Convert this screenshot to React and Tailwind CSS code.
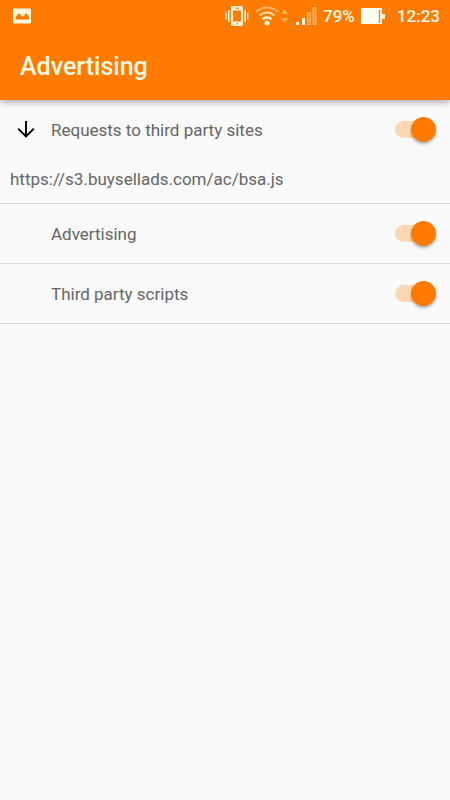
import React, { useState } from 'react'

const INITIAL_RULES = [
  {
    id: 'requests',
    label: 'Requests to third party sites',
    urls: ['https://s3.buysellads.com/ac/bsa.js'],
    enabled: true,
  },
  { id: 'advertising', label: 'Advertising', urls: [], enabled: true },
  { id: 'scripts', label: 'Third party scripts', urls: [], enabled: true },
]

function PictureIcon() {
  return (
    <svg width="20" height="16" viewBox="0 0 20 16" aria-hidden="true">
      <rect x="1" y="0.5" width="18" height="15" rx="1" fill="#fff8e0" />
      <path d="M3.5 11.5V9l3-3.5h1L10 8.5h1.5l2.2-3h1.3L17 9v2.5z" fill="#ff7b00" />
    </svg>
  )
}

function VibrateIcon() {
  return (
    <svg width="24" height="22" viewBox="0 0 24 22" fill="none" aria-hidden="true">
      <rect x="6" y="1" width="12" height="20" rx="1.5" fill="#fff3d6" />
      <path d="M8 5.5h8v11H8z" fill="#ff7b00" />
      <path d="M10 3.2h4M11 18.8h2" stroke="#ff7b00" strokeWidth="1" />
      <path d="M3.8 5v12M20.2 5v12" stroke="#fff3d6" strokeWidth="1.6" />
      <path d="M1.2 7.5v7M22.8 7.5v7" stroke="#ffe3b8" strokeWidth="1.5" />
    </svg>
  )
}

function WifiIcon() {
  return (
    <svg width="34" height="22" viewBox="0 0 34 22" fill="none" aria-hidden="true">
      <path d="M1.3 7a15 15 0 0 1 21.4 0" stroke="#ffb568" strokeWidth="2.2" />
      <path d="M4.6 10.6a10.4 10.4 0 0 1 14.8 0" stroke="#ffd9a5" strokeWidth="2.2" />
      <path d="M7.6 14.3a6.2 6.2 0 0 1 8.8 0" stroke="#fff8e6" strokeWidth="2.4" />
      <circle cx="12" cy="18" r="2.5" fill="#fff8e6" />
      <path d="M26 9l3.5-4.5L33 9zM26 13l3.5 4.5L33 13z" fill="#ffb25c" />
    </svg>
  )
}

function SignalIcon() {
  return (
    <svg width="22" height="20" viewBox="0 0 22 20" aria-hidden="true">
      <path d="M1 16h3v3H1zM7 12h3v7H7z" fill="#fff8e6" />
      <path d="M12.5 6.5h3v12h-3zM18 1.5h3v17h-3z" fill="#ff9836" stroke="#ffb568" strokeWidth="1" />
    </svg>
  )
}

function BatteryIcon() {
  return (
    <svg width="24" height="18" viewBox="0 0 24 18" aria-hidden="true">
      <path d="M0 1h21v16H0z" fill="#fffdf4" />
      <path d="M18.5 3v13" stroke="#d98a3c" strokeWidth="1.4" />
      <path d="M21 7h3v5h-3z" fill="#fff3d6" />
    </svg>
  )
}

function ArrowDownIcon() {
  return (
    <svg width="18" height="18" viewBox="0 0 18 18" fill="none" aria-hidden="true">
      <path d="M9 0v15M1.2 7.6 9 15.4l7.8-7.8" stroke="#000" strokeWidth="2" />
    </svg>
  )
}

function StatusBar() {
  return (
    <div className="flex h-8 items-center justify-between pl-3 pr-[10px] text-[#fff8e6]">
      <PictureIcon />
      <div className="flex items-center text-[17px] leading-6 font-medium">
        <VibrateIcon />
        <span className="ml-[6px]">
          <WifiIcon />
        </span>
        <span className="ml-[6px]">
          <SignalIcon />
        </span>
        <span className="ml-[6px]">79%</span>
        <span className="ml-[6px]">
          <BatteryIcon />
        </span>
        <span className="ml-3">12:23</span>
      </div>
    </div>
  )
}

function Switch({ id, checked, onChange }) {
  return (
    <input
      id={id}
      type="checkbox"
      role="switch"
      checked={checked}
      onChange={onChange}
      className="grid h-[25px] w-[41px] shrink-0 cursor-pointer appearance-none items-center before:col-start-1 before:row-start-1 before:h-[17px] before:w-[36px] before:rounded-full before:bg-gray-300 before:content-[''] after:col-start-1 after:row-start-1 after:size-[25px] after:rounded-full after:bg-gray-50 after:shadow-[0_2px_3px_rgba(0,0,0,0.3)] after:content-[''] checked:before:bg-[#fbd7b3] checked:after:justify-self-end checked:after:bg-[#ff7b00]"
    />
  )
}

export default function App() {
  const [rules, setRules] = useState(INITIAL_RULES)

  function toggleRule(id) {
    setRules(rules.map((r) => (r.id === id ? { ...r, enabled: !r.enabled } : r)))
  }

  return (
    <div className="min-h-screen bg-[#fafafa] font-[Roboto,sans-serif] text-[#666]">
      <header className="bg-[#ff7b00] shadow-[0_2px_7px_rgba(0,0,0,0.35)]">
        <StatusBar />
        <h1 className="px-5 pb-4 pt-[18px] text-[25px] leading-[34px] font-medium text-[#fff8e6]">
          Advertising
        </h1>
      </header>

      <ul>
        {rules.map((rule) => (
          <li key={rule.id} className="border-b border-[#d9d9d9]">
            <div className="flex h-[59px] items-center pr-[14px]">
              <span className="flex w-[51px] justify-center">
                {rule.urls.length > 0 && <ArrowDownIcon />}
              </span>
              <label htmlFor={rule.id} className="flex-1 text-[17px] leading-7">
                {rule.label}
              </label>
              <Switch
                id={rule.id}
                checked={rule.enabled}
                onChange={() => toggleRule(rule.id)}
              />
            </div>
            {rule.urls.map((url) => (
              <p key={url} className="px-[10px] pb-[10px] pt-[6px] text-[17px] leading-7">
                {url}
              </p>
            ))}
          </li>
        ))}
      </ul>
    </div>
  )
}
